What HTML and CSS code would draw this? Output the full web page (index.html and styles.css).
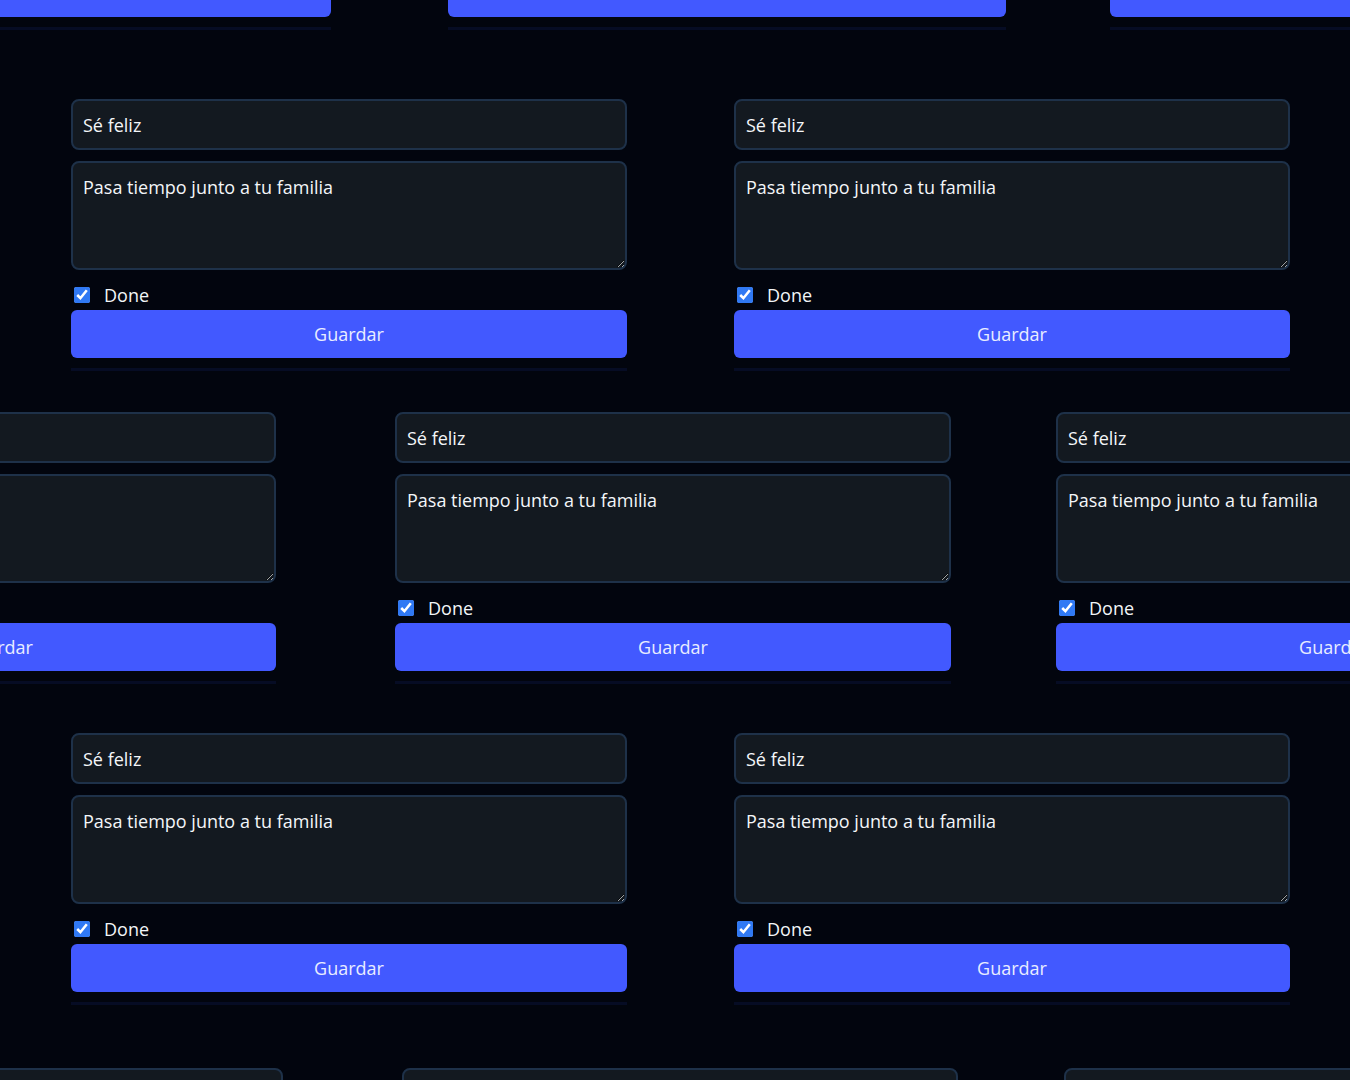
FILE: index.html
```html
<!DOCTYPE html>
<html lang="es">
<head>
<meta charset="utf-8">
<title>Tareas</title>
<link rel="stylesheet" href="styles.css">
</head>
<body>
<main class="page">
  <div class="row row-1">
    <form class="card"><input class="field" type="text" value="Sé feliz"><textarea class="area">Pasa tiempo junto a tu familia</textarea><label class="check"><input type="checkbox" checked><span>Done</span></label><button class="save" type="button">Guardar</button><div class="rule"></div></form>
    <form class="card"><input class="field" type="text" value="Sé feliz"><textarea class="area">Pasa tiempo junto a tu familia</textarea><label class="check"><input type="checkbox" checked><span>Done</span></label><button class="save" type="button">Guardar</button><div class="rule"></div></form>
    <form class="card"><input class="field" type="text" value="Sé feliz"><textarea class="area">Pasa tiempo junto a tu familia</textarea><label class="check"><input type="checkbox" checked><span>Done</span></label><button class="save" type="button">Guardar</button><div class="rule"></div></form>
  </div>
  <div class="row row-2">
    <form class="card"><input class="field" type="text" value="Sé feliz"><textarea class="area">Pasa tiempo junto a tu familia</textarea><label class="check"><input type="checkbox" checked><span>Done</span></label><button class="save" type="button">Guardar</button><div class="rule"></div></form>
    <form class="card"><input class="field" type="text" value="Sé feliz"><textarea class="area">Pasa tiempo junto a tu familia</textarea><label class="check"><input type="checkbox" checked><span>Done</span></label><button class="save" type="button">Guardar</button><div class="rule"></div></form>
  </div>
  <div class="row row-3">
    <form class="card"><input class="field" type="text" value="Sé feliz"><textarea class="area">Pasa tiempo junto a tu familia</textarea><label class="check"><input type="checkbox" checked><span>Done</span></label><button class="save" type="button">Guardar</button><div class="rule"></div></form>
    <form class="card"><input class="field" type="text" value="Sé feliz"><textarea class="area">Pasa tiempo junto a tu familia</textarea><label class="check"><input type="checkbox" checked><span>Done</span></label><button class="save" type="button">Guardar</button><div class="rule"></div></form>
    <form class="card"><input class="field" type="text" value="Sé feliz"><textarea class="area">Pasa tiempo junto a tu familia</textarea><label class="check"><input type="checkbox" checked><span>Done</span></label><button class="save" type="button">Guardar</button><div class="rule"></div></form>
  </div>
  <div class="row row-4">
    <form class="card"><input class="field" type="text" value="Sé feliz"><textarea class="area">Pasa tiempo junto a tu familia</textarea><label class="check"><input type="checkbox" checked><span>Done</span></label><button class="save" type="button">Guardar</button><div class="rule"></div></form>
    <form class="card"><input class="field" type="text" value="Sé feliz"><textarea class="area">Pasa tiempo junto a tu familia</textarea><label class="check"><input type="checkbox" checked><span>Done</span></label><button class="save" type="button">Guardar</button><div class="rule"></div></form>
  </div>
  <div class="row row-5">
    <form class="card"><input class="field" type="text" value="Sé feliz"><textarea class="area">Pasa tiempo junto a tu familia</textarea><label class="check"><input type="checkbox" checked><span>Done</span></label><button class="save" type="button">Guardar</button><div class="rule"></div></form>
    <form class="card"><input class="field" type="text" value="Sé feliz"><textarea class="area">Pasa tiempo junto a tu familia</textarea><label class="check"><input type="checkbox" checked><span>Done</span></label><button class="save" type="button">Guardar</button><div class="rule"></div></form>
    <form class="card"><input class="field" type="text" value="Sé feliz"><textarea class="area">Pasa tiempo junto a tu familia</textarea><label class="check"><input type="checkbox" checked><span>Done</span></label><button class="save" type="button">Guardar</button><div class="rule"></div></form>
  </div>
</main>
</body>
</html>
```
FILE: styles.css
```css
html, body {
  margin: 0;
  padding: 0;
  background: #02050e;
  overflow: hidden;
}

body {
  font-family: "Open Sans", "Noto Sans", sans-serif;
  font-size: 18px;
  color: #f2f5f8;
  color-scheme: dark;
}

.page {
  height: 100vh;
  overflow: hidden;
  display: flex;
  flex-direction: column;
}

.row {
  display: flex;
  flex: none;
}

.card {
  flex: none;
  width: 556px;
  margin: 0;
  display: flex;
  flex-direction: column;
}

.field,
.area {
  box-sizing: border-box;
  width: 100%;
  margin: 0;
  font: inherit;
  color: #f4f6f9;
  background: #131920;
  border: 2px solid #1e3149;
  border-radius: 8px;
  padding: 11px 10px;
  outline: none;
}

.field {
  height: 51px;
}

.area {
  margin-top: 11px;
  height: 109px;
  resize: vertical;
  line-height: 24px;
  padding-top: 12px;
}

.check {
  display: flex;
  align-items: center;
  height: 24px;
  margin-top: 13px;
  line-height: 24px;
}

.check input {
  width: 16px;
  height: 16px;
  margin: 0 14px 0 3px;
  accent-color: #3079f4;
}

.save {
  margin-top: 3px;
  height: 48px;
  width: 100%;
  border: none;
  border-radius: 6px;
  background: #4259ff;
  color: #e9edff;
  font: inherit;
  cursor: pointer;
}

.rule {
  margin-top: 10px;
  height: 3px;
  background: #060c24;
}

.row-1 { margin-top: -242px; margin-left: -225px; gap: 117px; }
.row-1 .card:nth-child(2) { width: 558px; }
.row-1 .card:nth-child(3) { margin-left: -13px; }

.row-2 { margin-top: 69px; margin-left: 71px; gap: 107px; }

.row-3 { margin-top: 41px; margin-left: -280px; gap: 119px; }
.row-3 .card:nth-child(3) { margin-left: -14px; }

.row-4 { margin-top: 49px; margin-left: 71px; gap: 107px; }

.row-5 { margin-top: 63px; margin-left: -273px; gap: 119px; }
.row-5 .card:nth-child(3) { margin-left: -13px; }
```
